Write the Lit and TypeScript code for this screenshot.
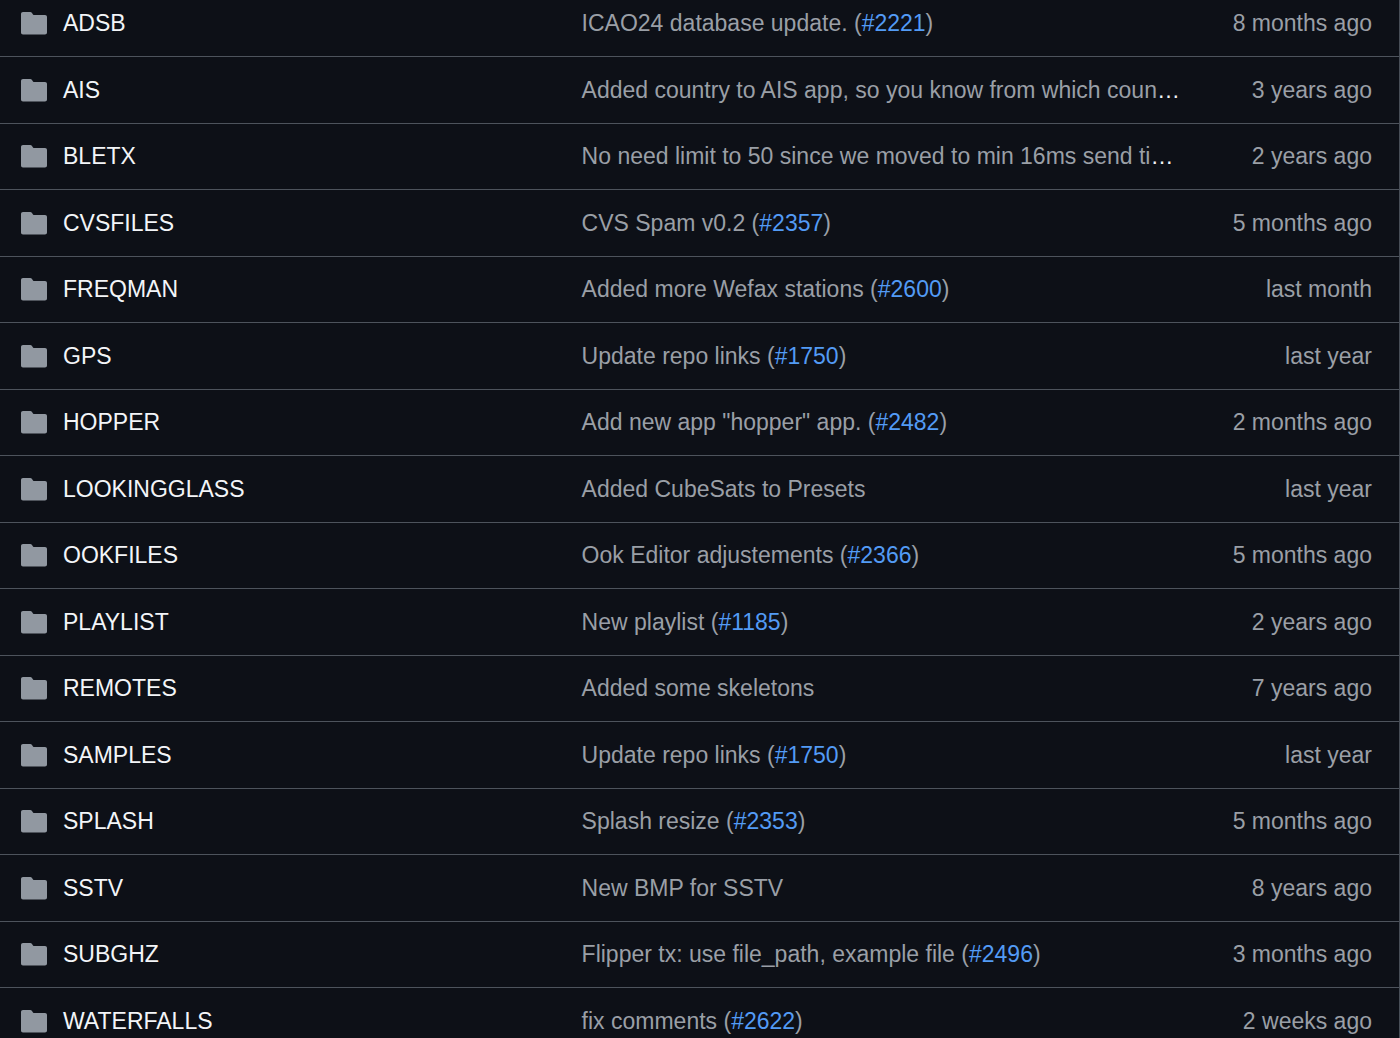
import { LitElement, html, css, nothing } from "lit";
import { customElement } from "lit/decorators.js";

interface Entry {
  name: string;
  message: string;
  issue?: number;
  more?: boolean;
  age: string;
}

const entries: Entry[] = [
  { name: "ADSB", message: "ICAO24 database update.", issue: 2221, age: "8 months ago" },
  { name: "AIS", message: "Added country to AIS app, so you know from which coun", more: true, age: "3 years ago" },
  { name: "BLETX", message: "No need limit to 50 since we moved to min 16ms send ti", more: true, age: "2 years ago" },
  { name: "CVSFILES", message: "CVS Spam v0.2", issue: 2357, age: "5 months ago" },
  { name: "FREQMAN", message: "Added more Wefax stations", issue: 2600, age: "last month" },
  { name: "GPS", message: "Update repo links", issue: 1750, age: "last year" },
  { name: "HOPPER", message: 'Add new app "hopper" app.', issue: 2482, age: "2 months ago" },
  { name: "LOOKINGGLASS", message: "Added CubeSats to Presets", age: "last year" },
  { name: "OOKFILES", message: "Ook Editor adjustements", issue: 2366, age: "5 months ago" },
  { name: "PLAYLIST", message: "New playlist", issue: 1185, age: "2 years ago" },
  { name: "REMOTES", message: "Added some skeletons", age: "7 years ago" },
  { name: "SAMPLES", message: "Update repo links", issue: 1750, age: "last year" },
  { name: "SPLASH", message: "Splash resize", issue: 2353, age: "5 months ago" },
  { name: "SSTV", message: "New BMP for SSTV", age: "8 years ago" },
  { name: "SUBGHZ", message: "Flipper tx: use file_path, example file", issue: 2496, age: "3 months ago" },
  { name: "WATERFALLS", message: "fix comments", issue: 2622, age: "2 weeks ago" },
];

@customElement("app-root")
export class AppRoot extends LitElement {
  static styles = css`
    :host {
      display: block;
      height: 100vh;
      overflow: hidden;
      background: #0d1017;
      color: #f3f5f8;
      font: 23px/26px "Liberation Sans", Arial, sans-serif;
    }
    .files {
      width: 100%;
      table-layout: fixed;
      border-collapse: separate;
      border-spacing: 0;
      border-right: 1px solid #484e57;
    }
    .name-col {
      width: 40%;
    }
    .age-col {
      width: 212px;
    }
    .cell {
      box-sizing: border-box;
      height: 67px;
      padding: 0;
      border-bottom: 1px solid #4d535c;
      text-align: left;
      font-weight: 400;
      vertical-align: middle;
      white-space: nowrap;
    }
    .row:nth-child(odd) .cell {
      height: 66px;
      padding-bottom: 1px;
    }
    .row:first-child .cell {
      height: 57px;
      padding-bottom: 20px;
      vertical-align: bottom;
    }
    .entry {
      display: flex;
      align-items: center;
      gap: 16px;
      padding-left: 21px;
    }
    .icon {
      flex: none;
      width: 26px;
      height: 24px;
      fill: #9198a1;
    }
    .message {
      padding-left: 22px;
      overflow: hidden;
      text-overflow: ellipsis;
    }
    .muted {
      color: #9a9fa6;
    }
    .age {
      padding-right: 27px;
      text-align: right;
      color: #9a9fa6;
    }
    .link {
      color: inherit;
      text-decoration: none;
    }
    .issue {
      color: #539bf5;
      text-decoration: none;
    }
  `;

  private renderRow(e: Entry) {
    return html`<tr class="row">
      <th class="cell" scope="row">
        <div class="entry">
          <svg class="icon" viewBox="0 0 26 24" aria-hidden="true">
            <path
              d="M2 1H9.2C10 1 10.6 1.4 11 2L12 3.4C12.3 3.8 12.6 4 13.2 4H24C25.2 4 26 4.8 26 6V21.5C26 22.7 25.2 23.5 24 23.5H2C.8 23.5 0 22.7 0 21.5V3C0 1.8 .8 1 2 1Z"
            />
          </svg>
          <a class="link" href="#${e.name}">${e.name}</a>
        </div>
      </th>
      <td class="cell">
        <div class="message">
          <span class="muted"
            >${e.message}${e.issue
              ? html` (<a class="issue" href="#${e.issue}">#${e.issue}</a>)`
              : nothing}</span
          >${e.more ? "…" : nothing}
        </div>
      </td>
      <td class="cell"><div class="age">${e.age}</div></td>
    </tr>`;
  }

  render() {
    return html`<table class="files" aria-label="Folders">
      <colgroup>
        <col class="name-col" />
        <col />
        <col class="age-col" />
      </colgroup>
      <tbody>
        ${entries.map((e) => this.renderRow(e))}
      </tbody>
    </table>`;
  }
}
